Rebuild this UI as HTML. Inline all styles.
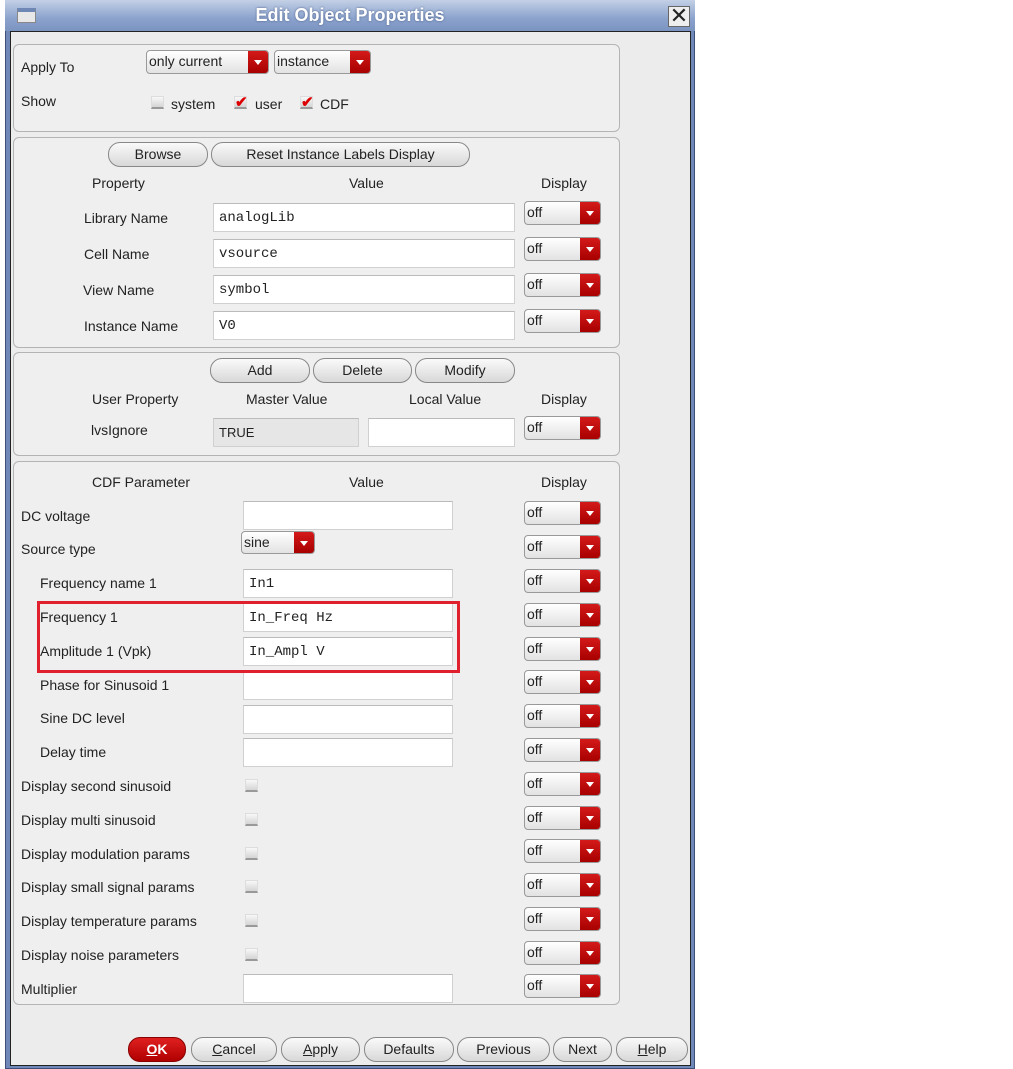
<!DOCTYPE html>
<html><head><meta charset="utf-8"><style>
*{box-sizing:border-box;margin:0;padding:0}
body{width:1013px;height:1069px;background:#fff;position:relative;overflow:hidden;font-family:"Liberation Sans",sans-serif;font-size:14px;color:#222}
.win{position:absolute;left:5px;top:0;width:690px;height:1069px;background:#6f88b8;border:1px solid #3c4f78}
.title{position:absolute;left:5px;top:0;width:690px;height:31px;background:linear-gradient(#c3d0e6,#8aa2cc 60%,#7b93c0)}
.title span{position:absolute;left:0;right:0;top:5px;text-align:center;color:#fff;font-weight:bold;font-size:18px;text-shadow:0 0 2px #4a5e88}
.ico{position:absolute;left:12px;top:8px;width:19px;height:15px;background:#e8e8e8;border:1px solid #888;border-top:4px solid #6f87b5}
.x{position:absolute;left:668px;top:6px;width:22px;height:21px;background:#eee;border:1px solid #666;font-size:22px;line-height:18px;text-align:center;color:#222}
.body{position:absolute;left:10px;top:31px;width:681px;height:1035px;background:#ececec;border:1px solid #222}
.p{position:absolute;border:1px solid #b4b4b4;border-radius:6px;background:#efefef}
.a{position:absolute;white-space:nowrap}
.tf{position:absolute;background:#fff;border:1px solid #d0d0d0;border-top-color:#bbb;font-family:"Liberation Mono",monospace;font-size:14px;padding:6px 0 0 5px;height:29px}
.dd{position:absolute;width:77px;height:24px;border:1px solid #999;border-radius:4px;background:linear-gradient(#fff,#e2e2e2);font-size:14px;padding:2px 0 0 2px;overflow:hidden}
.dd i{position:absolute;right:0;top:0;bottom:0;width:20px;background:linear-gradient(#d41a1a,#a80000)}
.dd i:after{content:"";position:absolute;left:6px;top:9px;border-left:4px solid transparent;border-right:4px solid transparent;border-top:5px solid #fff}
.b{position:absolute;height:25px;border:1px solid #888;border-radius:12px;background:linear-gradient(#fafafa,#d8d8d8);text-align:center;font-size:14px;line-height:23px}
.cb{position:absolute;width:13px;height:13px;background:linear-gradient(#f8f8f8,#d4d4d4);border:1px solid #ddd;border-bottom:2px solid #999}
.ck{position:absolute;color:#d00;font-size:15px;font-weight:bold;line-height:12px}
</style></head><body>
<div class="win"></div>
<div class="title"><div class="ico"></div><span>Edit Object Properties</span><div class="x" style="left:663px">✕</div></div>
<div class="body"></div>

<div class="p" style="left:13px;top:44px;width:607px;height:88px"></div>
<div class="a" style="left:21px;top:59px">Apply To</div>
<div class="a" style="left:21px;top:93px">Show</div>
<div class="dd" style="left:146px;top:50px;width:123px">only current<i></i></div>
<div class="dd" style="left:274px;top:50px;width:97px">instance<i></i></div>
<div class="cb" style="left:151px;top:96px"></div><div class="a" style="left:171px;top:96px">system</div>
<div class="cb" style="left:234px;top:96px"></div><div class="ck" style="left:235px;top:97px">✔</div><div class="a" style="left:255px;top:96px">user</div>
<div class="cb" style="left:300px;top:96px"></div><div class="ck" style="left:301px;top:97px">✔</div><div class="a" style="left:320px;top:96px">CDF</div>

<div class="p" style="left:13px;top:137px;width:607px;height:211px"></div>
<div class="b" style="left:108px;top:142px;width:100px">Browse</div>
<div class="b" style="left:211px;top:142px;width:259px">Reset Instance Labels Display</div>
<div class="a" style="left:92px;top:175px">Property</div>
<div class="a" style="left:349px;top:175px">Value</div>
<div class="a" style="left:541px;top:175px">Display</div>
<div class="a" style="left:84px;top:210px">Library Name</div>
<div class="a" style="left:84px;top:246px">Cell Name</div>
<div class="a" style="left:83px;top:282px">View Name</div>
<div class="a" style="left:84px;top:318px">Instance Name</div>
<div class="tf" style="left:213px;top:203px;width:302px">analogLib</div>
<div class="tf" style="left:213px;top:239px;width:302px">vsource</div>
<div class="tf" style="left:213px;top:275px;width:302px">symbol</div>
<div class="tf" style="left:213px;top:311px;width:302px">V0</div>
<div class="dd" style="left:524px;top:201px">off<i></i></div>
<div class="dd" style="left:524px;top:237px">off<i></i></div>
<div class="dd" style="left:524px;top:273px">off<i></i></div>
<div class="dd" style="left:524px;top:309px">off<i></i></div>

<div class="p" style="left:13px;top:352px;width:607px;height:104px"></div>
<div class="b" style="left:210px;top:358px;width:100px">Add</div>
<div class="b" style="left:313px;top:358px;width:99px">Delete</div>
<div class="b" style="left:415px;top:358px;width:100px">Modify</div>
<div class="a" style="left:92px;top:391px">User Property</div>
<div class="a" style="left:246px;top:391px">Master Value</div>
<div class="a" style="left:409px;top:391px">Local Value</div>
<div class="a" style="left:541px;top:391px">Display</div>
<div class="a" style="left:91px;top:422px">lvsIgnore</div>
<div class="tf" style="left:213px;top:418px;width:146px;background:#e6e6e6;font-family:'Liberation Sans',sans-serif;font-size:13px">TRUE</div>
<div class="tf" style="left:368px;top:418px;width:147px"></div>
<div class="dd" style="left:524px;top:416px">off<i></i></div>

<div class="p" style="left:13px;top:461px;width:607px;height:544px"></div>
<div class="a" style="left:92px;top:474px">CDF Parameter</div>
<div class="a" style="left:349px;top:474px">Value</div>
<div class="a" style="left:541px;top:474px">Display</div>

<div class="a" style="left:21px;top:508px">DC voltage</div>
<div class="a" style="left:21px;top:541px">Source type</div>
<div class="a" style="left:40px;top:575px">Frequency name 1</div>
<div class="a" style="left:40px;top:609px">Frequency 1</div>
<div class="a" style="left:40px;top:643px">Amplitude 1 (Vpk)</div>
<div class="a" style="left:40px;top:677px">Phase for Sinusoid 1</div>
<div class="a" style="left:40px;top:710px">Sine DC level</div>
<div class="a" style="left:40px;top:744px">Delay time</div>
<div class="a" style="left:21px;top:778px">Display second sinusoid</div>
<div class="a" style="left:21px;top:812px">Display multi sinusoid</div>
<div class="a" style="left:21px;top:846px">Display modulation params</div>
<div class="a" style="left:21px;top:879px">Display small signal params</div>
<div class="a" style="left:21px;top:913px">Display temperature params</div>
<div class="a" style="left:21px;top:947px">Display noise parameters</div>
<div class="a" style="left:21px;top:981px">Multiplier</div>

<div class="tf" style="left:243px;top:501px;width:210px"></div>
<div class="dd" style="left:241px;top:531px;width:74px;height:23px">sine<i></i></div>
<div class="tf" style="left:243px;top:569px;width:210px">In1</div>
<div class="tf" style="left:243px;top:603px;width:210px">In_Freq Hz</div>
<div class="tf" style="left:243px;top:637px;width:210px">In_Ampl V</div>
<div class="tf" style="left:243px;top:671px;width:210px"></div>
<div class="tf" style="left:243px;top:705px;width:210px"></div>
<div class="tf" style="left:243px;top:738px;width:210px"></div>
<div class="tf" style="left:243px;top:974px;width:210px"></div>
<div class="cb" style="left:245px;top:779px"></div>
<div class="cb" style="left:245px;top:813px"></div>
<div class="cb" style="left:245px;top:847px"></div>
<div class="cb" style="left:245px;top:880px"></div>
<div class="cb" style="left:245px;top:914px"></div>
<div class="cb" style="left:245px;top:948px"></div>

<div class="dd" style="left:524px;top:501px">off<i></i></div>
<div class="dd" style="left:524px;top:535px">off<i></i></div>
<div class="dd" style="left:524px;top:569px">off<i></i></div>
<div class="dd" style="left:524px;top:603px">off<i></i></div>
<div class="dd" style="left:524px;top:637px">off<i></i></div>
<div class="dd" style="left:524px;top:670px">off<i></i></div>
<div class="dd" style="left:524px;top:704px">off<i></i></div>
<div class="dd" style="left:524px;top:738px">off<i></i></div>
<div class="dd" style="left:524px;top:772px">off<i></i></div>
<div class="dd" style="left:524px;top:806px">off<i></i></div>
<div class="dd" style="left:524px;top:839px">off<i></i></div>
<div class="dd" style="left:524px;top:873px">off<i></i></div>
<div class="dd" style="left:524px;top:907px">off<i></i></div>
<div class="dd" style="left:524px;top:941px">off<i></i></div>
<div class="dd" style="left:524px;top:974px">off<i></i></div>

<div style="position:absolute;left:37px;top:601px;width:423px;height:72px;border:3px solid #e0202c"></div>

<div class="b" style="left:128px;top:1037px;width:58px;background:linear-gradient(#e02020,#b00000);color:#fff;font-weight:bold;border-color:#800"><u>O</u>K</div>
<div class="b" style="left:191px;top:1037px;width:86px"><u>C</u>ancel</div>
<div class="b" style="left:281px;top:1037px;width:79px"><u>A</u>pply</div>
<div class="b" style="left:364px;top:1037px;width:90px">Defaults</div>
<div class="b" style="left:457px;top:1037px;width:93px">Previous</div>
<div class="b" style="left:553px;top:1037px;width:59px">Next</div>
<div class="b" style="left:616px;top:1037px;width:72px"><u>H</u>elp</div>
</body></html>
